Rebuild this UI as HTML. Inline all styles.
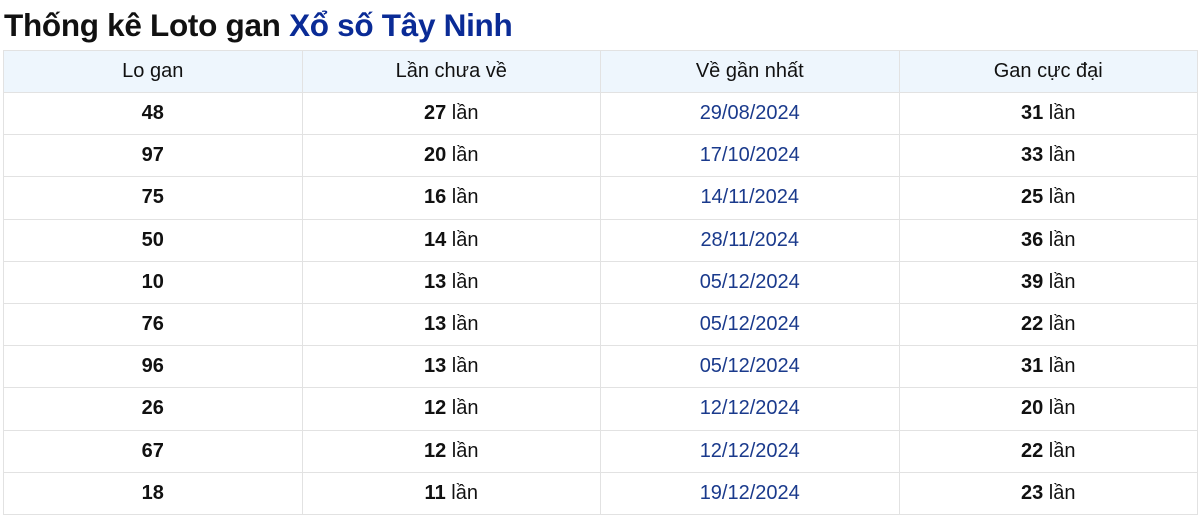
<!DOCTYPE html>
<html><head><meta charset="utf-8"><style>
body{margin:0;background:#fff;font-family:"Liberation Sans",sans-serif;width:1200px;height:515px;overflow:hidden}
h1{margin:0;position:absolute;left:4px;top:7px;font-size:31.5px;font-weight:bold;color:#111;letter-spacing:-0.3px}
h1 span{color:#0a2b96}
table{position:absolute;left:3px;top:50px;width:1195px;border-collapse:collapse;table-layout:fixed}
td,th{border:1px solid #e2e2e2;text-align:center;height:41.2px;padding:0;font-size:20px;color:#111}
th{background:#eef6fd;font-weight:normal;height:41px}
td b{font-weight:bold}
td.d{color:#1a3a8c}
</style></head><body>
<h1>Thống kê Loto gan <span>Xổ số Tây Ninh</span></h1>
<table>
<tr><th>Lo gan</th><th>Lần chưa về</th><th>Về gần nhất</th><th>Gan cực đại</th></tr>
<tr><td><b>48</b></td><td><b>27</b> lần</td><td class="d">29/08/2024</td><td><b>31</b> lần</td></tr>
<tr><td><b>97</b></td><td><b>20</b> lần</td><td class="d">17/10/2024</td><td><b>33</b> lần</td></tr>
<tr><td><b>75</b></td><td><b>16</b> lần</td><td class="d">14/11/2024</td><td><b>25</b> lần</td></tr>
<tr><td><b>50</b></td><td><b>14</b> lần</td><td class="d">28/11/2024</td><td><b>36</b> lần</td></tr>
<tr><td><b>10</b></td><td><b>13</b> lần</td><td class="d">05/12/2024</td><td><b>39</b> lần</td></tr>
<tr><td><b>76</b></td><td><b>13</b> lần</td><td class="d">05/12/2024</td><td><b>22</b> lần</td></tr>
<tr><td><b>96</b></td><td><b>13</b> lần</td><td class="d">05/12/2024</td><td><b>31</b> lần</td></tr>
<tr><td><b>26</b></td><td><b>12</b> lần</td><td class="d">12/12/2024</td><td><b>20</b> lần</td></tr>
<tr><td><b>67</b></td><td><b>12</b> lần</td><td class="d">12/12/2024</td><td><b>22</b> lần</td></tr>
<tr><td><b>18</b></td><td><b>11</b> lần</td><td class="d">19/12/2024</td><td><b>23</b> lần</td></tr>
</table>
</body></html>
